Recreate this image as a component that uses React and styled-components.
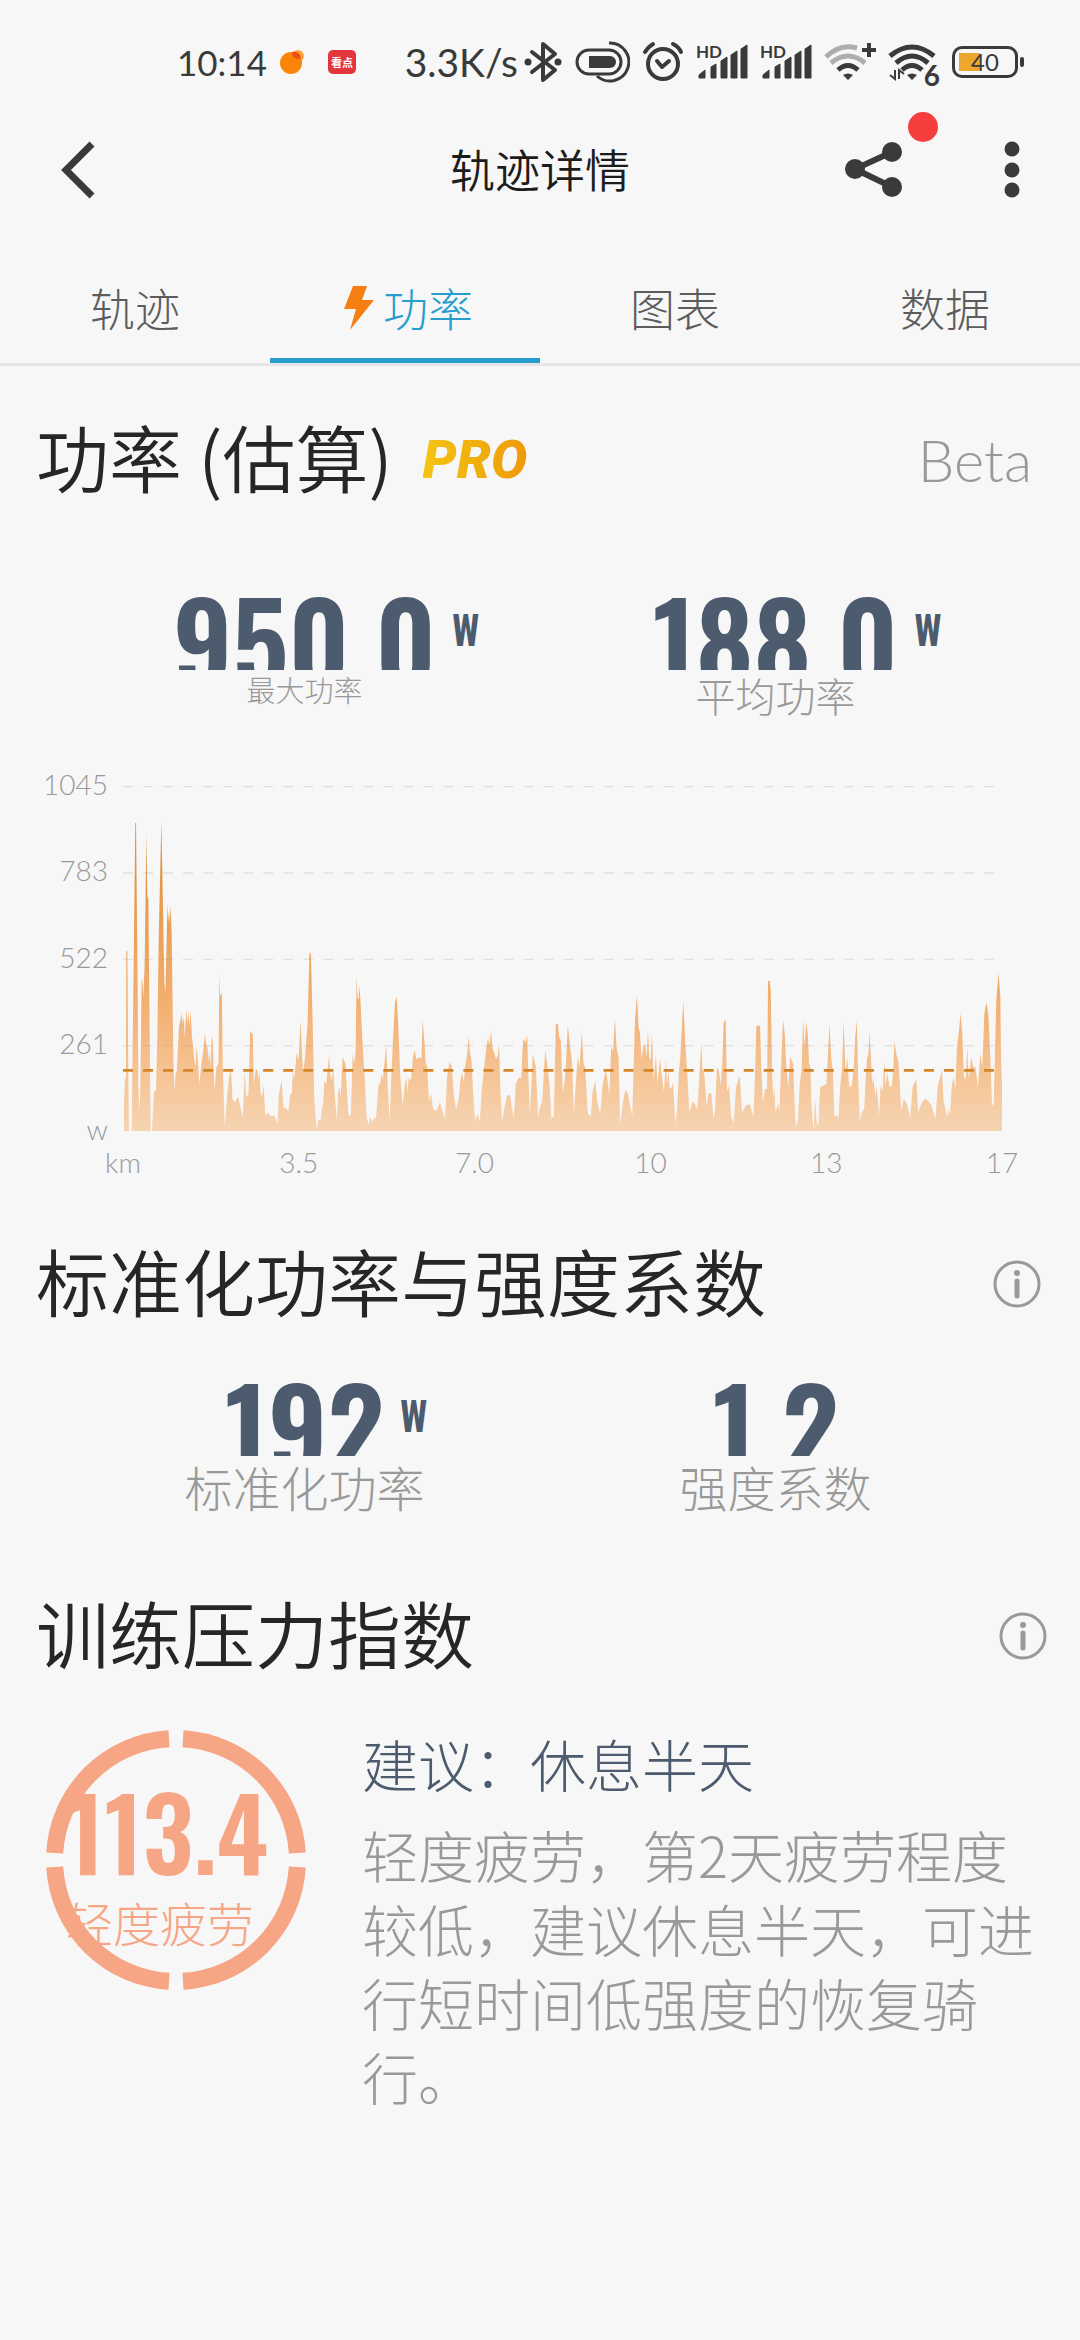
import React from "react";
import styled, { createGlobalStyle } from "styled-components";

// x position and height of the power trace, plot is 2634 x 1035 units
const trace = [
  3,81, 6,156, 9,161, 10,539, 13,539, 16,161, 18,0, 26,0, 29,261, 37,925, 39,925, 44,421, 46,131, 49,58, 52,131,
  56,453, 58,453, 61,401, 65,501, 70,891, 73,701, 76,696, 81,181, 83,0, 87,0, 93,121, 99,119, 103,291, 107,581,
  115,930, 120,661, 124,441, 127,416, 131,581, 133,686, 135,626, 138,661, 140,626, 143,676, 146,581, 151,211,
  154,119, 158,176, 161,176, 168,316, 173,336, 176,353, 178,321, 182,341, 185,281, 190,366, 193,316, 196,363,
  199,311, 202,361, 207,281, 213,221, 217,191, 221,256, 225,201, 229,141, 235,201, 242,251, 245,294, 249,261,
  253,251, 256,211, 258,241, 262,191, 266,286, 269,271, 274,119, 280,191, 286,201, 289,469, 291,401, 294,414,
  296,414, 299,191, 305,11, 311,91, 318,161, 321,176, 324,176, 328,96, 336,86, 345,103, 351,76, 359,41, 365,181,
  369,101, 376,111, 381,298, 389,291, 392,141, 398,186, 403,181, 406,156, 409,181, 413,106, 418,111, 421,138,
  427,43, 433,56, 441,46, 454,45, 463,21, 467,111, 475,151, 481,69, 489,69, 496,59, 501,111, 506,111, 509,181,
  513,156, 521,236, 526,211, 532,331, 537,221, 540,171, 546,226, 553,321, 559,536, 563,531, 568,341, 573,101,
  580,6, 585,31, 593,36, 596,71, 600,81, 603,151, 609,141, 614,191, 618,228, 621,171, 625,151, 630,191, 635,101,
  641,31, 645,121, 649,131, 652,96, 658,221, 667,201, 672,101, 676,49, 683,46, 688,231, 693,201, 697,241,
  700,463, 703,396, 706,396, 709,436, 712,381, 718,261, 724,161, 730,41, 736,18, 740,43, 748,28, 754,41, 758,36,
  766,141, 770,141, 775,171, 779,156, 784,211, 789,259, 793,141, 799,33, 804,161, 809,271, 815,386, 820,403,
  825,311, 831,161, 838,76, 845,141, 849,161, 852,116, 857,161, 863,151, 869,221, 874,243, 879,216, 889,221,
  894,216, 898,333, 903,271, 908,191, 911,206, 917,86, 923,113, 929,66, 939,59, 950,86, 957,61, 965,36, 971,161,
  978,206, 985,196, 991,111, 998,63, 1006,96, 1011,151, 1016,176, 1021,146, 1026,201, 1031,226, 1036,286,
  1039,241, 1044,216, 1049,121, 1055,31, 1062,51, 1069,29, 1075,121, 1082,191, 1089,251, 1094,281, 1098,256,
  1103,301, 1107,251, 1118,216, 1123,226, 1127,261, 1131,121, 1136,31, 1143,71, 1151,106, 1160,108, 1165,71,
  1171,41, 1177,141, 1186,161, 1193,156, 1199,276, 1206,266, 1211,289, 1215,161, 1219,51, 1224,141, 1228,231,
  1237,191, 1244,43, 1251,77, 1256,86, 1265,241, 1271,201, 1278,141, 1284,36, 1291,46, 1297,321, 1303,321,
  1307,281, 1312,271, 1318,116, 1325,161, 1333,316, 1339,261, 1346,201, 1351,51, 1358,161, 1363,221, 1368,191,
  1375,301, 1380,201, 1385,191, 1393,51, 1402,46, 1407,116, 1415,151, 1421,91, 1430,49, 1437,136, 1447,186,
  1452,151, 1457,106, 1463,251, 1469,241, 1474,339, 1479,251, 1485,221, 1490,16, 1497,81, 1505,123, 1513,113,
  1520,71, 1526,46, 1534,326, 1540,409, 1545,311, 1549,296, 1554,216, 1561,263, 1566,251, 1569,221, 1573,303,
  1577,221, 1581,211, 1585,293, 1590,151, 1597,226, 1602,141, 1609,219, 1614,171, 1621,116, 1627,216, 1630,141,
  1635,181, 1638,126, 1644,131, 1648,146, 1655,23, 1660,61, 1666,181, 1670,221, 1679,391, 1685,261, 1691,171,
  1697,56, 1707,89, 1714,81, 1721,63, 1727,161, 1733,268, 1736,186, 1742,171, 1749,71, 1754,113, 1763,113,
  1769,41, 1774,61, 1780,191, 1786,181, 1791,136, 1796,211, 1800,326, 1806,333, 1810,121, 1816,136, 1822,46,
  1830,23, 1837,131, 1848,166, 1855,56, 1868,79, 1879,79, 1889,41, 1893,141, 1898,316, 1909,316, 1913,181,
  1918,86, 1924,126, 1930,126, 1933,451, 1938,451, 1941,421, 1945,181, 1948,101, 1952,131, 1955,56, 1963,81,
  1967,61, 1972,201, 1978,333, 1983,291, 1988,191, 1994,131, 1999,223, 2008,201, 2012,101, 2016,11, 2023,36,
  2028,141, 2034,191, 2038,341, 2042,251, 2047,329, 2052,291, 2056,201, 2060,191, 2063,81, 2069,3, 2074,96,
  2079,23, 2084,21, 2089,131, 2108,141, 2117,321, 2122,221, 2127,181, 2132,41, 2139,49, 2144,36, 2149,131,
  2155,191, 2159,329, 2165,181, 2170,221, 2176,131, 2184,136, 2190,191, 2194,281, 2199,331, 2203,161, 2208,29,
  2214,56, 2221,66, 2229,216, 2234,231, 2237,299, 2241,221, 2245,141, 2249,161, 2254,101, 2258,136, 2266,46,
  2270,136, 2277,121, 2281,211, 2285,131, 2290,176, 2297,131, 2304,136, 2308,181, 2312,271, 2318,226, 2324,206,
  2332,61, 2340,96, 2349,81, 2359,41, 2366,131, 2377,156, 2383,56, 2394,86, 2405,98, 2422,79, 2435,36, 2441,131,
  2454,183, 2459,91, 2469,41, 2474,66, 2478,46, 2484,141, 2490,161, 2494,121, 2499,251, 2505,301, 2510,353,
  2515,291, 2520,161, 2525,156, 2530,251, 2534,156, 2542,221, 2548,191, 2555,191, 2562,129, 2569,231, 2575,191,
  2581,351, 2587,386, 2593,351, 2599,221, 2604,81, 2609,76, 2617,396, 2624,473, 2629,401, 2631,221, 2634,141,
];

const tracePath = () => {
  let d = "M3 1035";
  for (let i = 0; i < trace.length; i += 2) {
    d += `L${trace[i]} ${1035 - trace[i + 1]}`;
  }
  return d + "L2634 1035Z";
};

const tabs = ["轨迹", "功率", "图表", "数据"];

// Status icons
const Bluetooth = () => (
  <svg width="38" height="42" viewBox="0 0 38 42" fill="none" stroke="#3a3a3a" strokeWidth="4">
    <path d="M8 11 L31 29 L19 39 V3 L31 13 L8 31" strokeLinejoin="round" strokeLinecap="round" />
    <circle cx="4" cy="21" r="3.5" fill="#3a3a3a" stroke="none" />
    <circle cx="34" cy="21" r="3.5" fill="#3a3a3a" stroke="none" />
  </svg>
);
const Capsule = () => (
  <svg width="56" height="42" viewBox="0 0 56 42" fill="none" stroke="#3a3a3a" strokeWidth="3">
    <rect x="3" y="9" width="44" height="24" rx="12" />
    <path d="M15 15 H36 A6 6 0 0 1 36 27 H15 Z" fill="#3a3a3a" stroke="none" />
    <path d="M35 2 A19 19 0 1 1 23 35" />
  </svg>
);
const Alarm = () => (
  <svg width="42" height="42" viewBox="0 0 42 42" fill="none" stroke="#3a3a3a" strokeWidth="4">
    <circle cx="21" cy="23" r="15" />
    <path d="M15 20 L20 26 L27 20" strokeLinecap="round" strokeLinejoin="round" />
    <path d="M3 11 Q6 6 11 3 M31 3 Q37 6 39 11" strokeLinecap="round" />
  </svg>
);
const Signal = () => (
  <SignalBox>
    <span>HD</span>
    <svg width="52" height="42" viewBox="0 0 52 42" fill="#3a3a3a">
      <path d="M3 37 V34 L9 29 V37 Z M15 37 V26 L20 23 V37 Z M25 37 V20 L31 16 V37 Z M35 37 V14 L41 10 V37 Z M45 37 V8 L51 4 V37 Z" strokeWidth="1" stroke="#3a3a3a" strokeLinejoin="round" />
    </svg>
  </SignalBox>
);
const WifiPlus = () => (
  <svg width="52" height="42" viewBox="0 0 52 42" fill="none" stroke="#3a3a3a" strokeWidth="5">
    <path d="M2 16 Q16 2 33 7" stroke="#adadad" />
    <path d="M7 22 Q24 8 41 22" stroke="#adadad" />
    <path d="M14 29 Q24 20 34 29" />
    <path d="M19 34 Q24 31 29 34 L24 39 Z" fill="#3a3a3a" stroke="none" />
    <path d="M38 9 H52 M45 2 V16" strokeWidth="4" />
  </svg>
);
const WifiSix = () => (
  <WifiSixBox>
    <svg width="52" height="42" viewBox="0 0 52 42" fill="none" stroke="#3a3a3a" strokeWidth="5">
      <path d="M2 15 Q24 -3 46 15" />
      <path d="M8 22 Q24 8 40 22" />
      <path d="M14 29 Q24 20 34 29" />
      <path d="M19 34 Q24 31 29 34 L24 39 Z" fill="#3a3a3a" stroke="none" />
      <path d="M7 29 V38 L2 34 M11 38 V29 L16 33" strokeWidth="2" />
    </svg>
    <span>6</span>
  </WifiSixBox>
);

const Info = () => (
  <svg width="50" height="50" viewBox="0 0 50 50" fill="none">
    <circle cx="25" cy="25" r="22" stroke="#999" strokeWidth="3" />
    <circle cx="25" cy="14" r="3" fill="#999" />
    <path d="M25 22 V37" stroke="#999" strokeWidth="5" strokeLinecap="round" />
  </svg>
);

const StatItem = ({ value, unit, label, size }) => (
  <Stat>
    <Reading>
      <Digits>{value}</Digits>
      {unit && <Unit>{unit}</Unit>}
    </Reading>
    <StatLabel $size={size}>{label}</StatLabel>
  </Stat>
);

const PowerChart = () => (
  <Chart>
    <YAxis>
      <li>1045</li>
      <li>783</li>
      <li>522</li>
      <li>261</li>
      <li>w</li>
    </YAxis>
    <Plot viewBox="0 0 2634 1035" preserveAspectRatio="none">
      <defs>
        <linearGradient id="power" x1="0" y1="105" x2="0" y2="1035" gradientUnits="userSpaceOnUse">
          <stop offset="0" stopColor="#d88f3c" />
          <stop offset="0.3" stopColor="#e89d52" />
          <stop offset="0.6" stopColor="#f4b071" />
          <stop offset="1" stopColor="#f6d4b3" />
        </linearGradient>
      </defs>
      <path d={tracePath()} fill="url(#power)" />
      <g stroke="#999" strokeOpacity="0.24" strokeWidth="4" strokeDasharray="30 30">
        <path d="M0 2 H2610 M0 261 H2610 M0 520 H2610 M0 779 H2610" />
      </g>
      <path d="M0 853 H2610" stroke="#d58528" strokeWidth="8" strokeDasharray="30 30" />
    </Plot>
    <XAxis>
      <li>km</li>
      <li>3.5</li>
      <li>7.0</li>
      <li>10</li>
      <li>13</li>
      <li>17</li>
    </XAxis>
  </Chart>
);

const App = () => {
  return (
    <Page>
      <GlobalStyle />
      <StatusBar>
        <Clock>10:14</Clock>
        <svg width="26" height="26" viewBox="0 0 26 26">
          <circle cx="19" cy="7" r="6" fill="#fba63a" />
          <circle cx="12" cy="14" r="11" fill="#f98407" />
          <path d="M13 3 A7 7 0 0 1 22 9 A6 6 0 0 1 13 3" fill="#ee4d13" />
        </svg>
        <NewsBadge>
          <b>看点</b>
        </NewsBadge>
        <Speed>3.3K/s</Speed>
        <StatusIcons>
          <Bluetooth />
          <Capsule />
          <Alarm />
          <Signal />
          <Signal />
          <WifiPlus />
          <WifiSix />
          <Battery>
            <span>40</span>
          </Battery>
        </StatusIcons>
      </StatusBar>

      <Header>
        <IconButton aria-label="返回">
          <svg width="36" height="58" viewBox="0 0 36 58" fill="none">
            <path d="M32 3 L6 29 L32 55" stroke="#3a3a3a" strokeWidth="7" />
          </svg>
        </IconButton>
        <h1>轨迹详情</h1>
        <Actions>
          <IconButton aria-label="分享">
            <svg width="58" height="58" viewBox="0 0 58 58" fill="#3a3a3a">
              <path d="M47 11 L10 28 L47 46" fill="none" stroke="#3a3a3a" strokeWidth="6" />
              <circle cx="47" cy="11" r="10" />
              <circle cx="10" cy="28" r="10" />
              <circle cx="47" cy="46" r="10" />
            </svg>
            <Dot />
          </IconButton>
          <IconButton aria-label="更多">
            <svg width="16" height="58" viewBox="0 0 16 58" fill="#3a3a3a">
              <circle cx="8" cy="8" r="7.5" />
              <circle cx="8" cy="29" r="7.5" />
              <circle cx="8" cy="49" r="7.5" />
            </svg>
          </IconButton>
        </Actions>
      </Header>

      <Tabs>
        {tabs.map((tab) => (
          <Tab key={tab} $active={tab === "功率"}>
            {tab === "功率" && (
              <svg width="32" height="44" viewBox="0 0 32 44">
                <path d="M10 0 H24 L19 14 H31 L7 44 L13 23 H1 Z" fill="#f57f13" />
              </svg>
            )}
            {tab}
          </Tab>
        ))}
      </Tabs>

      <Section>
        <Title>
          <h2>功率 (估算)</h2>
          <Pro>PRO</Pro>
          <Beta>Beta</Beta>
        </Title>
        <Stats $top={70}>
          <StatItem value="950.0" unit="W" label="最大功率" size={29} />
          <StatItem value="188.0" unit="W" label="平均功率" size={40} />
        </Stats>
        <PowerChart />
      </Section>

      <Section>
        <Title>
          <h2>标准化功率与强度系数</h2>
          <InfoButton aria-label="说明" $right={50}>
            <Info />
          </InfoButton>
        </Title>
        <Stats $top={32}>
          <StatItem value="192" unit="W" label="标准化功率" size={48} />
          <StatItem value="1.2" label="强度系数" size={48} />
        </Stats>
      </Section>

      <Section>
        <Title>
          <h2>训练压力指数</h2>
          <InfoButton aria-label="说明" $right={44}>
            <Info />
          </InfoButton>
        </Title>
        <Stress>
          <Ring>
            <svg width="260" height="260" viewBox="0 0 260 260" fill="none" stroke="#f6a685" strokeWidth="17">
              <path d="M123 8.7 A121.5 121.5 0 0 0 8.7 123 M137 8.7 A121.5 121.5 0 0 1 251.3 123 M251.3 137 A121.5 121.5 0 0 1 137 251.3 M123 251.3 A121.5 121.5 0 0 1 8.7 137" />
            </svg>
            <Score>
              <strong>113.4</strong>
              <span>轻度疲劳</span>
            </Score>
          </Ring>
          <Advice>
            <h3>建议：休息半天</h3>
            <p>轻度疲劳，第2天疲劳程度较低，建议休息半天，可进行短时间低强度的恢复骑行。</p>
          </Advice>
        </Stress>
      </Section>
    </Page>
  );
};

const GlobalStyle = createGlobalStyle`
* {
  margin: 0;
  padding: 0;
  box-sizing: border-box;
}
body {
  background: #f7f7f7;
  font-family: "Noto Sans CJK SC", sans-serif;
  font-weight: 300;
}
svg {
  display: block;
  flex: none;
}
ul {
  list-style: none;
}
button {
  border: none;
  background: none;
  font: inherit;
}
`;
const Page = styled.main`
  min-height: 100vh;
  padding-bottom: 200px;
`;
const StatusBar = styled.div`
  display: flex;
  align-items: center;
  height: 124px;
  padding: 0 56px 0 177px;
  color: #3a3a3a;
  font-family: Lato, sans-serif;
  font-weight: 400;
  font-size: 39px;
`;
const Clock = styled.span`
  width: 102px;
  font-size: 35px;
`;
const NewsBadge = styled.span`
  width: 28px;
  height: 24px;
  margin-left: 23px;
  border-radius: 5px;
  background: #e3353c;
  color: #fff;
  text-align: center;
  b {
    display: block;
    font: 700 11px/24px "Noto Sans CJK SC", sans-serif;
  }
`;
const Speed = styled.span`
  margin-left: auto;
`;
const StatusIcons = styled.div`
  display: flex;
  align-items: center;
  gap: 12px;
  margin-left: 6px;
`;
const SignalBox = styled.div`
  position: relative;
  span {
    position: absolute;
    top: 2px;
    left: 0;
    font: 700 17px/17px Lato, sans-serif;
  }
`;
const WifiSixBox = styled.div`
  position: relative;
  span {
    position: absolute;
    right: 0;
    bottom: -6px;
    font: 700 28px/28px Lato, sans-serif;
  }
`;
const Battery = styled.div`
  position: relative;
  width: 66px;
  height: 32px;
  margin-right: 6px;
  border: 3px solid #3a3a3a;
  border-radius: 10px;
  background: linear-gradient(#eda62e, #eda62e) 4px 4px / 21px 18px no-repeat;
  text-align: center;
  span {
    display: block;
    font: 400 24px/26px Lato, sans-serif;
  }
  &::after {
    content: "";
    position: absolute;
    right: -9px;
    top: 8px;
    width: 4px;
    height: 10px;
    border-radius: 2px;
    background: #3a3a3a;
  }
`;
const Header = styled.header`
  display: grid;
  grid-template-columns: 1fr auto 1fr;
  align-items: center;
  height: 92px;
  margin-bottom: 36px;
  padding: 0 60px;
  h1 {
    padding-bottom: 4px;
    color: #1c1c1c;
    font-size: 45px;
    font-weight: 350;
  }
`;
const IconButton = styled.button`
  position: relative;
  justify-self: start;
`;
const Actions = styled.div`
  display: flex;
  justify-content: flex-end;
  gap: 101px;
`;
const Dot = styled.i`
  position: absolute;
  top: -29px;
  right: -35px;
  width: 30px;
  height: 30px;
  border-radius: 50%;
  background: #f73e3e;
`;
const Tabs = styled.nav`
  display: grid;
  grid-template-columns: repeat(4, 1fr);
  height: 114px;
  border-bottom: 3px solid #e5e5e5;
`;
const Tab = styled.button`
  display: flex;
  align-items: center;
  justify-content: center;
  gap: 8px;
  padding-left: ${(p) => (p.$active ? 6 : 0)}px;
  color: ${(p) => (p.$active ? "#269dcd" : "#5c5c5c")};
  font-size: 45px;
  box-shadow: ${(p) => (p.$active ? "inset 0 -5px #269dcd" : "none")};
`;
const Section = styled.section`
  padding-top: 46px;
  & + & {
    padding-top: 54px;
  }
  & + & + & {
    padding-top: 72px;
  }
`;
const Title = styled.div`
  display: flex;
  align-items: center;
  height: 96px;
  padding-left: 36px;
  h2 {
    padding-bottom: 10px;
    color: #262626;
    font-size: 73px;
    font-weight: 350;
    line-height: 96px;
  }
`;
const Pro = styled.span`
  margin-left: 30px;
  background: linear-gradient(90deg, #f4c414, #ee9a08);
  background-clip: text;
  color: transparent;
  font: italic 900 54px/60px Roboto, sans-serif;
`;
const Beta = styled.span`
  margin: 0 48px 0 auto;
  color: #999;
  font: 300 58px/72px Lato, sans-serif;
`;
const InfoButton = styled.button`
  margin-left: auto;
  margin-right: ${(p) => p.$right - 12}px;
`;
const Stats = styled.div`
  display: grid;
  grid-template-columns: 1fr 1fr;
  margin-top: ${(p) => p.$top}px;
  padding: 0 69px;
`;
const Stat = styled.div`
  text-align: center;
`;
// digits stay centred, the unit hangs in the right column
const Reading = styled.div`
  display: grid;
  grid-template-columns: 1fr auto 1fr;
  height: 92px;
  overflow: hidden;
  color: #4d5b6e;
  font-family: Oswald, "Roboto Condensed", sans-serif;
  font-weight: 600;
`;
const Digits = styled.span`
  grid-column: 2;
  font-size: 112px;
  line-height: 120px;
  font-variant-numeric: tabular-nums;
`;
const Unit = styled.span`
  justify-self: start;
  margin: 30px 0 0 16px;
  font-size: 39px;
  line-height: 40px;
`;
const StatLabel = styled.p`
  color: #999;
  font-size: ${(p) => p.$size}px;
  line-height: ${(p) => (p.$size === 29 ? 38 : p.$size === 40 ? 50 : 60)}px;
`;
const Chart = styled.div`
  display: grid;
  grid-template-columns: 108px 1fr;
  column-gap: 15px;
  margin-top: 66px;
  padding-right: 78px;
  color: #999;
  font: 300 28px/40px Lato, sans-serif;
`;
const YAxis = styled.ul`
  display: flex;
  flex-direction: column;
  justify-content: space-between;
  margin: -22px 0 -18px;
  text-align: right;
`;
const Plot = styled.svg`
  width: 100%;
  height: 345px;
`;
const XAxis = styled.ul`
  grid-column: 2;
  display: flex;
  justify-content: space-between;
  margin: 11px -40px 0;
  li {
    width: 80px;
    text-align: center;
  }
`;
const Stress = styled.div`
  display: flex;
  align-items: flex-start;
  gap: 56px;
  margin-top: 46px;
  padding: 0 44px 0 46px;
`;
const Ring = styled.div`
  position: relative;
`;
const Score = styled.div`
  position: absolute;
  top: 44px;
  left: 20px;
  display: flex;
  flex-direction: column;
  color: #f6a685;
  strong {
    font: 600 100px/112px Oswald, "Roboto Condensed", sans-serif;
    font-variant-numeric: tabular-nums;
  }
  span {
    font-size: 47px;
    line-height: 72px;
  }
`;
const Advice = styled.div`
  flex: 1;
  h3 {
    color: #4d5b6e;
    font-size: 56px;
    font-weight: 300;
    line-height: 66px;
  }
  p {
    margin-top: 21px;
    color: #999;
    font-size: 56px;
    line-height: 74px;
  }
`;
export default App;
